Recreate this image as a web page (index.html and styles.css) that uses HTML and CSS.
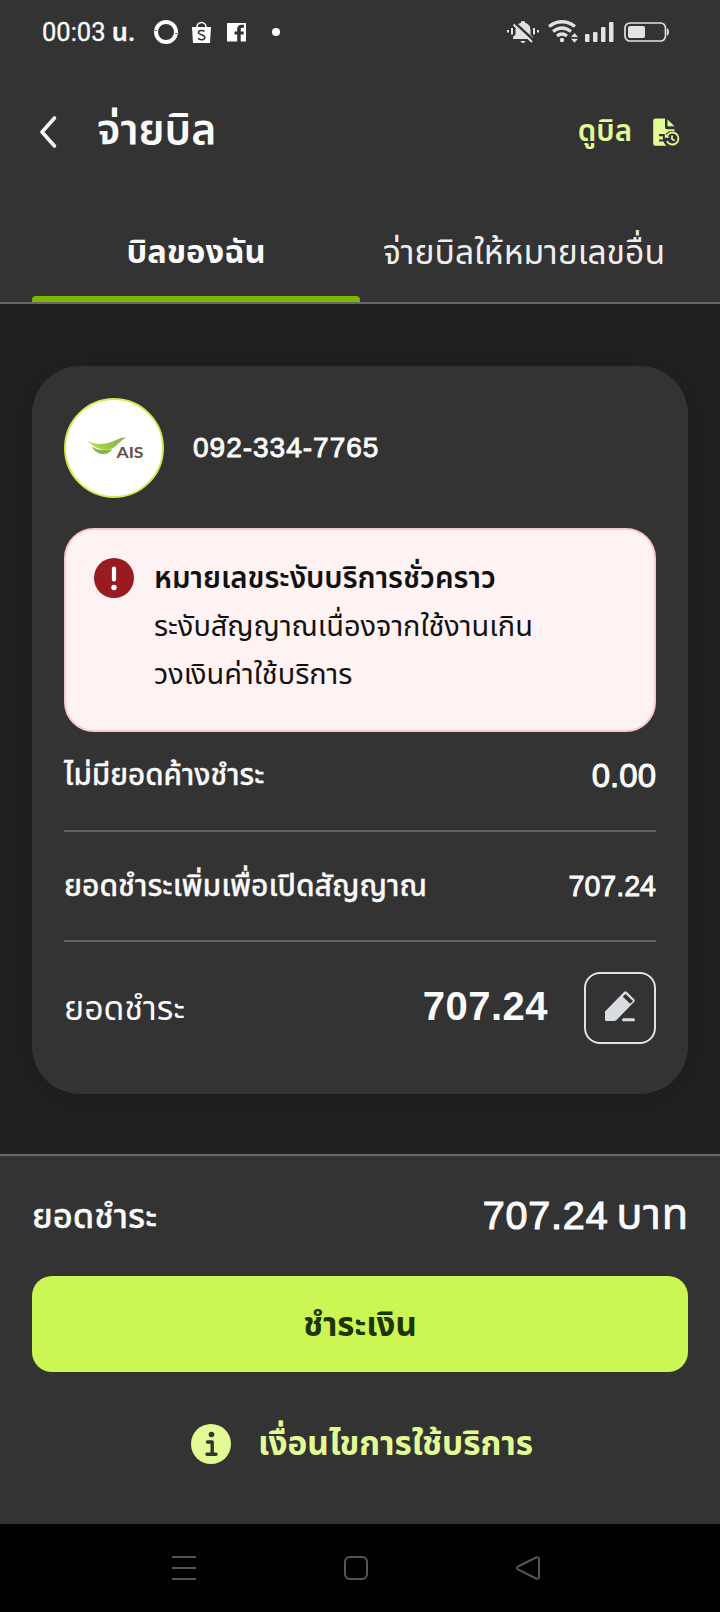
FILE: index.html
```html
<!DOCTYPE html>
<html lang="th">
<head>
<meta charset="utf-8">
<title>จ่ายบิล</title>
<link rel="stylesheet" href="styles.css">
</head>
<body>
<div class="screen">
  <div class="status">
    <span class="t clock">00:03 <b>น.</b></span>
    <svg class="status-left" width="134" height="28" viewBox="152 18 134 28">
      <circle cx="166" cy="32" r="10" fill="none" stroke="#fff" stroke-width="4"/>
      <path d="M153 30.500h4M175 33.500h4" stroke="#777" stroke-width="1"/>
      <path d="M192 27h19l-1 16h-17z" fill="#fff"/>
      <path d="M197 27a4.500 4.500 0 0 1 9 0" fill="none" stroke="#fff" stroke-width="1.600"/>
      <path d="M204.500 31.500c-2-1.700-6-1.300-6 1 0 2.600 6.300 1.800 6.300 4.900 0 2.700-4.300 3-6.800 1" fill="none" stroke="#333" stroke-width="1.500"/>
      <path d="M227 23h19v18.500h-5.300v-7h3v-3h-3v-2c0-1.200.6-1.700 1.700-1.700h1.600v-3h-2.600c-2.700 0-4.200 1.600-4.200 4.200v2.500h-2.700v3h2.700v7H227z" fill="#fff"/>
      <circle cx="276" cy="32" r="4" fill="#fff"/>
    </svg>
    <svg class="status-right" width="164" height="28" viewBox="506 18 164 28">
      <g fill="#e2e2e2">
        <path d="M513 39v-2l2.500-2.500V30c0-4 2-6.500 5.500-7.300V22q0-1 2-1t2 1v.7c3.500.8 5.500 3.500 5.500 7.300v4.500L533 37v2z"/>
        <path d="M520.500 41h5q-.5 2-2.500 2t-2.500-2z"/>
        <path d="M507 30h2v2.500h-2zM511 28h2v6.500h-2zM533 28h2v6.500h-2zM537 30h2v2.500h-2z"/>
        <circle cx="562" cy="40" r="2.200"/>
        <path d="M571 37l3.500-4 3.500 4zM571 38.800l3.500 4 3.500-4z"/>
        <rect x="585" y="34" width="4.500" height="8" rx="1"/><rect x="593" y="32" width="4.500" height="10" rx="1"/><rect x="601" y="27" width="4.500" height="15" rx="1"/><rect x="609" y="22" width="4.500" height="20" rx="1"/>
        <rect x="628" y="26" width="17" height="12" rx="2"/>
        <path d="M667 28.500c2.600 0 2.600 7 0 7z"/>
      </g>
      <path d="M515.500 23.500l17.500 16" stroke="#333" stroke-width="2.400"/>
      <path d="M513.500 24.500l18.500 17.500" stroke="#e2e2e2" stroke-width="2"/>
      <path d="M549 26.500q13-9.500 26 0M553 31.500q9-7 18 0M557 36q5-4 10 0" fill="none" stroke="#e2e2e2" stroke-width="3.200"/>
      <rect x="625" y="23" width="40.500" height="18" rx="5" fill="none" stroke="#e2e2e2" stroke-width="1.700"/>
    </svg>
  </div>
  <header class="header">
    <svg class="back" width="20" height="36" viewBox="38 113 20 36"><path d="M54.500 117L42 131l12.500 14" fill="none" stroke="#f5f5f5" stroke-width="3.600" stroke-linecap="round" stroke-linejoin="round"/></svg>
    <h1 class="t title">จ่ายบิล</h1>
    <span class="t view">ดูบิล</span>
    <svg class="doc" width="28" height="30" viewBox="652 116 28 30">
      <path d="M655.500 117.500H665v8.700q0 2 2 2h7.500v2a8.500 8.500 0 0 0-9 2.800h-6.500v2.200h4l-.3 3.200h-3.700v2.200h4.500q1 3 3 4.100h-11q-2.300 0-2.300-2.300v-22.600q0-2.300 2.300-2.300z" fill="#e3fb94"/>
      <path d="M667.500 118.500l7 6.800h-7z" fill="#e3fb94"/>
      <path d="M667 135a6 6 0 1 1 0 5M672 134.500v3.500l2.700 1.500" fill="none" stroke="#e3fb94" stroke-width="1.800"/>
      <path d="M664.800 132v4.800h4.800z" fill="#e3fb94"/>
    </svg>
  </header>
  <nav class="tabs">
    <div class="tab active"><span class="t tab-mine">บิลของฉัน</span></div>
    <div class="tab"><span class="t tab-other">จ่ายบิลให้หมายเลขอื่น</span></div>
  </nav>
  <main class="content">
    <section class="card">
      <div class="account">
        <div class="avatar">
          <svg width="96" height="96" viewBox="66 400 96 96">
            <defs><linearGradient id="leaf" x1="0" x2="1"><stop offset="0" stop-color="#c3dc52"/><stop offset="1" stop-color="#7cb043"/></linearGradient></defs>
            <path d="M87 440.500q8 4.500 18 3c8-1 14-6.500 21.500-6-5 2-8 6.500-12 9.500-9 5.500-19 2-27.500-6.500z" fill="url(#leaf)"/>
            <path d="M91.500 446.500q9 5.500 21 2.500-3 5-9 5.200-7.500 0-12-7.700z" fill="#86ba45"/>
            <text x="116.500" y="458" class="brand" textLength="27" lengthAdjust="spacingAndGlyphs">AIS</text>
          </svg>
        </div>
        <span class="t phone">092-334-7765</span>
      </div>
      <div class="alert">
        <svg width="40" height="40" viewBox="0 0 40 40"><circle cx="20" cy="20" r="20" fill="#981b22"/><path d="M20 10.500v11" stroke="#fff" stroke-width="4.200" stroke-linecap="round"/><circle cx="20" cy="29.500" r="2.700" fill="#fff"/></svg>
        <div class="alert-text">
          <strong class="t alert-title">หมายเลขระงับบริการชั่วคราว</strong>
          <span class="t alert-line">ระงับสัญญาณเนื่องจากใช้งานเกิน</span>
          <span class="t alert-line">วงเงินค่าใช้บริการ</span>
        </div>
      </div>
      <div class="row due"><span class="t due-label">ไม่มียอดค้างชำระ</span><span class="t due-value">0.00</span></div>
      <div class="row extra"><span class="t extra-label">ยอดชำระเพิ่มเพื่อเปิดสัญญาณ</span><span class="t extra-value">707.24</span></div>
      <div class="row pay">
        <span class="t pay-label">ยอดชำระ</span><span class="t pay-value">707.24</span>
        <button class="edit"><svg width="36" height="36" viewBox="602 990 36 36">
          <path d="M605 1011.500l19-19.500q1.500-1.500 3 0l7 7q1.500 1.500 0 3l-17.500 18q-1 1-2.500 1h-7.500q-1.500 0-1.500-1.500z" fill="#d9dce0"/>
          <path d="M625.500 994l7.500 7-2.700 2.700-7.500-7z" fill="#333"/>
          <path d="M623.500 1019.700h10" stroke="#d9dce0" stroke-width="3" stroke-linecap="round"/>
        </svg></button>
      </div>
    </section>
  </main>
  <footer class="footer">
    <div class="total"><span class="t total-label">ยอดชำระ</span><span class="t total-value">707.24 <span class="unit">บาท</span></span></div>
    <button class="submit"><span class="t submit-label">ชำระเงิน</span></button>
    <div class="terms">
      <svg width="40" height="40" viewBox="0 0 40 40"><circle cx="20" cy="20" r="20" fill="#e3fb94"/><circle cx="20.500" cy="10.500" r="2.800" fill="#333"/><path d="M16.500 18h4.700v12M16 30.200h9" fill="none" stroke="#333" stroke-width="3.400" stroke-linecap="round" stroke-linejoin="round"/></svg>
      <span class="t terms-label">เงื่อนไขการใช้บริการ</span>
    </div>
  </footer>
  <div class="system">
    <svg width="24" height="24"><path d="M0 1h24M0 12h24M0 23h24" stroke="#555" stroke-width="2"/></svg>
    <svg width="24" height="24"><rect x="1" y="1" width="22" height="22" rx="5" fill="none" stroke="#555" stroke-width="2"/></svg>
    <svg width="24" height="24"><path d="M2 10.500L20 1.500q3-1 3 2v17q0 3-3 2L2 13.500q-2-1.500 0-3z" fill="none" stroke="#555" stroke-width="2"/></svg>
  </div>
</div>
</body>
</html>
```
FILE: styles.css
```css
* { box-sizing: border-box; }
body { margin: 0; background: #333; color: #fafafa; font-family: "Liberation Sans", "Noto Sans Thai", "Noto Sans", sans-serif; }
svg { display: block; flex: none; }
button { padding: 0; border: 0; background: none; font: inherit; color: inherit; }
.screen { width: 720px; height: 1612px; display: flex; flex-direction: column; overflow: hidden; }
.t { display: block; white-space: nowrap; line-height: 48px; font-size: 28px; margin: 0; font-weight: 400; }

.status { height: 64px; padding: 0 50px 0 42px; display: flex; align-items: center; }
.status-left { margin-left: 18px; }
.status-right { margin-left: auto; }
.clock { font-family: Roboto, "Noto Sans Thai", sans-serif; font-size: 25.5px; width: 92px; -webkit-text-stroke: .3px; }
.clock b { font-weight: 600; }

.header { height: 136px; padding: 0 40px 0 38px; display: flex; align-items: center; }
.title { margin-left: 39px; padding-bottom: 6px; font-size: 42.7px; font-weight: 600; }
.view { margin-left: auto; padding-bottom: 2px; font-size: 29.5px; font-weight: 600; color: #e3fb94; }
.doc { margin-left: 20px; }

.tabs { height: 104px; padding: 0 32px; display: flex; border-bottom: 2px solid #666; }
.tab { flex: 1; height: 102px; padding-top: 28px; display: flex; justify-content: center; }
.tab.active::after { content: ""; width: 328px; height: 6px; border-radius: 4px 4px 0 0; background: #7db500; }
.tab.active { flex-direction: column; align-items: center; justify-content: space-between; }
.tab-mine { font-size: 32.7px; font-weight: 700; }
.tab-other { font-size: 33.7px; color: #eee; }

.content { height: 850px; padding: 62px 32px 60px; background: #212121; }
.card { height: 728px; padding: 32px; border-radius: 48px; background: #333; box-shadow: 0 4px 32px rgba(0, 0, 0, .2); }
.account { display: flex; align-items: center; }
.avatar { width: 100px; height: 100px; border: 2px solid #c8ee50; border-radius: 50%; background: #fff; overflow: hidden; }
.brand { font: 700 16px Lato, sans-serif; fill: #63504e; }
.phone { margin-left: 29px; font-size: 28px; letter-spacing: 1px; -webkit-text-stroke: .9px; }
.alert { height: 204px; margin-top: 30px; padding: 28px; display: flex; border: 2px solid #f9c9cb; border-radius: 30px; background: #fef2f2; color: #111; }
.alert-text { margin-left: 20px; margin-top: -4px; }
.alert-title { font-size: 29.4px; font-weight: 600; }
.alert-line { font-size: 28.9px; }

.row { display: flex; align-items: center; justify-content: space-between; }
.due { height: 100px; padding-bottom: 12px; border-bottom: 2px solid #5f6060; }
.due-label { font-size: 29.6px; font-weight: 500; -webkit-text-stroke: .3px; }
.due-value { padding-top: 2px; font-size: 33px; -webkit-text-stroke: 1px; }
.extra { height: 110px; border-bottom: 2px solid #5f6060; }
.extra-label { font-size: 30px; font-weight: 500; -webkit-text-stroke: .3px; }
.extra-value { font-size: 28.6px; -webkit-text-stroke: .9px; }
.pay { padding-top: 30px; }
.pay-label { font-size: 33.9px; }
.pay-value { margin-left: auto; padding-bottom: 5px; font-size: 40px; font-weight: 700; letter-spacing: .5px; }
.edit { width: 72px; height: 72px; margin-left: 36px; border: 2px solid #e2e2e2; border-radius: 16px; display: flex; align-items: center; justify-content: center; }

.footer { height: 370px; padding: 0 32px; border-top: 2px solid #666; }
.total { height: 120px; display: flex; align-items: center; justify-content: space-between; }
.total-label { font-size: 34.5px; font-weight: 500; -webkit-text-stroke: .3px; }
.total-value { padding-bottom: 4px; font-size: 39.5px; letter-spacing: .8px; word-spacing: -4px; -webkit-text-stroke: 1.2px; }
.unit { margin-right: -1px; font-size: 43.5px; font-weight: 400; -webkit-text-stroke: .7px; }
.submit { width: 656px; height: 96px; border-radius: 20px; background: #cbf654; color: #1d3500; display: flex; align-items: center; justify-content: center; }
.submit-label { padding-top: 1px; font-size: 33px; font-weight: 700; }
.terms { margin-top: 52px; padding-left: 159px; height: 40px; display: flex; align-items: center; color: #e3fb94; }
.terms-label { margin-left: 27px; font-size: 33.4px; font-weight: 700; }

.system { height: 88px; padding: 32px 180px 0 172px; display: flex; justify-content: space-between; background: #000; }
```
